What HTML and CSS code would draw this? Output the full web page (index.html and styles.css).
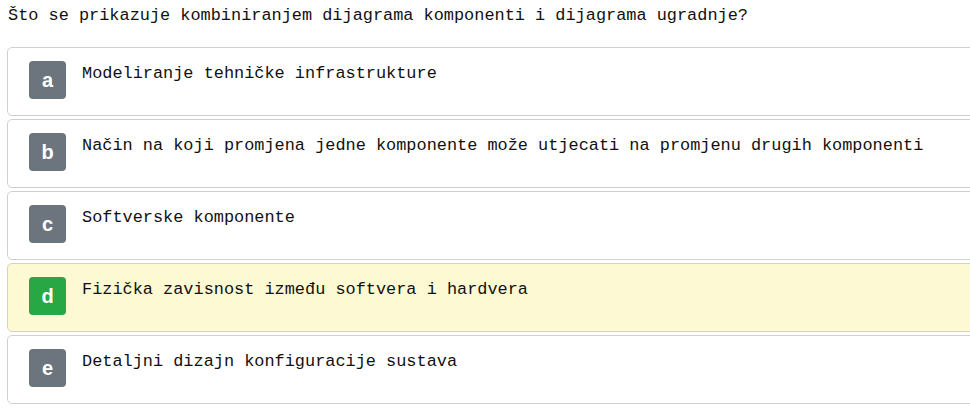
FILE: index.html
```html
<!DOCTYPE html>
<html lang="hr">
<head>
<meta charset="utf-8">
<title>Pitanje</title>
<link rel="stylesheet" href="styles.css">
</head>
<body>
<div class="quiz">
  <p class="question">Što se prikazuje kombiniranjem dijagrama komponenti i dijagrama ugradnje?</p>
  <ul class="options">
    <li class="option"><span class="badge">a</span><span class="label">Modeliranje tehničke infrastrukture</span></li>
    <li class="option"><span class="badge">b</span><span class="label">Način na koji promjena jedne komponente može utjecati na promjenu drugih komponenti</span></li>
    <li class="option"><span class="badge">c</span><span class="label">Softverske komponente</span></li>
    <li class="option correct"><span class="badge">d</span><span class="label">Fizička zavisnost između softvera i hardvera</span></li>
    <li class="option"><span class="badge">e</span><span class="label">Detaljni dizajn konfiguracije sustava</span></li>
  </ul>
</div>
</body>
</html>
```
FILE: styles.css
```css
html, body {
  margin: 0;
  padding: 0;
  background: #fff;
  overflow: hidden;
}
body {
  padding: 0 0 0 7px;
  font-family: "Liberation Mono", "Courier New", monospace;
  color: #111;
}
.quiz {
  width: 980px;
}
.question {
  margin: 0;
  padding: 6px 0 0 1px;
  font-size: 16.9px;
  line-height: 20px;
}
.options {
  list-style: none;
  margin: 21px 0 0 0;
  padding: 0;
  display: flex;
  flex-direction: column;
  gap: 3px;
}
.option {
  display: flex;
  align-items: flex-start;
  gap: 16px;
  height: 69px;
  box-sizing: border-box;
  padding: 13px 0 0 21px;
  border: 1px solid #cfcfcf;
  border-radius: 5px;
  background: #fff;
}
.option.correct {
  background: #fdf9d3;
  border-color: #d6d3bd;
}
.badge {
  flex: none;
  width: 37px;
  height: 38px;
  border-radius: 4px;
  background: #6c757d;
  color: #fff;
  font-family: "Liberation Sans", Arial, sans-serif;
  font-weight: bold;
  font-size: 20px;
  line-height: 38px;
  text-align: center;
}
.correct .badge {
  background: #28a745;
}
.label {
  font-size: 16.9px;
  line-height: 20px;
  padding-top: 3px;
}
```
